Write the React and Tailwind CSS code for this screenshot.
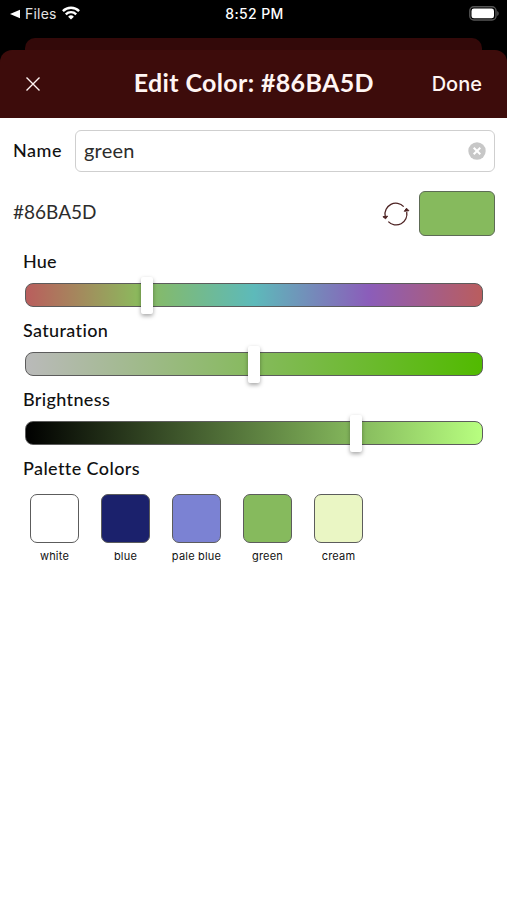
const sliders = [
  {
    label: 'Hue',
    value: 116,
    tracking: 'tracking-[0.2px]',
    track: 'bg-[linear-gradient(to_right,#ba5d5d,#8bba5d_25%,#5dbaba_50%,#8b5dba_75%,#ba5d5d)]',
  },
  {
    label: 'Saturation',
    value: 223,
    tracking: 'tracking-[0.35px]',
    track: 'bg-[linear-gradient(to_right,#bababa,#86ba5d_50%,#51ba00)]',
  },
  {
    label: 'Brightness',
    value: 325,
    tracking: 'tracking-[0.35px]',
    track: 'bg-[linear-gradient(to_right,#000000,#b8ff80)]',
  },
];

const palette = [
  { name: 'white', color: 'bg-white' },
  { name: 'blue', color: 'bg-[#1b216c]' },
  { name: 'pale blue', color: 'bg-[#7b82d3]' },
  { name: 'green', color: 'bg-[#86ba5d]' },
  { name: 'cream', color: 'bg-[#eaf6c4]' },
];

function StatusBar() {
  return (
    <div className="grid h-[27px] grid-cols-3 items-center pr-2 pl-[10px] font-['Inter',sans-serif] text-[14px] text-white">
      <div className="flex items-center">
        <svg className="mr-[5px] h-[10px] w-[10px]" viewBox="0 0 10 10" fill="currentColor">
          <path d="M0 5 10 .8v8.4z" />
        </svg>
        <span className="mr-[5px] tracking-[0.2px] text-[#e4e4e4]">Files</span>
        <svg className="-mt-[2px] h-[14px] w-[18px]" viewBox="0 0 18 14" fill="none" stroke="currentColor" strokeWidth="2.4">
          <path d="M.9 5.1a11.5 11.5 0 0 1 16.2 0" />
          <path d="M3.8 8.3a7.4 7.4 0 0 1 10.4 0" />
          <path d="M9 13.6 6.1 10.7a4.1 4.1 0 0 1 5.8 0z" fill="currentColor" stroke="none" />
        </svg>
      </div>
      <span className="text-center font-medium tracking-[0.4px]">8:52 PM</span>
      <svg className="h-[15px] w-[30px] justify-self-end" viewBox="0 0 30 15">
        <rect x=".8" y=".8" width="26.2" height="13.2" rx="4" fill="none" stroke="#555" strokeWidth="1.4" />
        <rect x="2.5" y="2.5" width="22.5" height="9.8" rx="2.4" fill="#fff" />
        <path d="M28.2 5v5c2-.8 2-4.2 0-5z" fill="#555" />
      </svg>
    </div>
  );
}

function Header() {
  return (
    <header className="flex h-[68px] items-center justify-between rounded-t-[12px] bg-[#3d0c0b] pr-[25px] pl-[26px] text-[#fff5f3]">
      <svg className="h-[14px] w-[14px]" viewBox="0 0 14 14" fill="none" stroke="currentColor" strokeWidth="1.4">
        <path d="M.5.5l13 13M13.5.5l-13 13" />
      </svg>
      <h1 className="ml-[36px] pb-[4px] text-[25px] leading-8 font-bold tracking-[0.35px] whitespace-nowrap">Edit Color: #86BA5D</h1>
      <button className="font-['Inter',sans-serif] text-[20px] font-medium">Done</button>
    </header>
  );
}

function Slider({ label, value, track, tracking }) {
  return (
    <section className="h-[69px] pl-[10px]">
      <h2 className={`h-[37px] pt-[3px] text-[18px] leading-6 font-medium ${tracking}`}>{label}</h2>
      <div className={`relative ml-[2px] h-[24px] w-[458px] rounded-[8px] border-[1.5px] border-[#5c5c5c] bg-origin-border ${track}`}>
        <div
          className="absolute -top-[7px] h-[37px] w-[12px] rounded-[2px] bg-white shadow-[0_2px_4px_rgba(0,0,0,0.35)]"
          style={{ left: value - 1 }}
        />
      </div>
    </section>
  );
}

export default function App() {
  return (
    <div className="min-h-[900px] w-[507px] bg-white font-['Lato',sans-serif] text-[#111]">
      <div className="bg-black">
        <StatusBar />
        <div className="mx-[25px] mt-[11px] h-3 rounded-t-[10px] bg-[#330909]" />
        <Header />
      </div>
      <main className="pt-[12px] pr-[12px] pl-[13px]">
        <label className="flex h-[42px] items-center">
          <span className="w-[62px] pb-px text-[18px] font-medium tracking-[0.5px]">Name</span>
          <span className="flex h-[42px] flex-1 items-center justify-between rounded-[6px] border border-[#cfcfcf] px-[8px]">
            <span className="pb-[2px] text-[20px] tracking-[0.2px] text-[#2c2c2c]">green</span>
            <svg className="h-[18px] w-[18px]" viewBox="0 0 18 18">
              <circle cx="9" cy="9" r="8.7" fill="#c7c7c7" />
              <path d="m5.7 5.7 6.6 6.6m0-6.6-6.6 6.6" stroke="#fff" strokeWidth="2" />
            </svg>
          </span>
        </label>
        <div className="mt-[19px] flex h-[45px] items-center">
          <span className="flex-1 pb-[2px] text-[19px] text-[#2c2c2c]">#86BA5D</span>
          <svg className="mr-[9px] h-[26px] w-[28px]" viewBox="0 0 28 26" fill="none" stroke="#4d2323" strokeWidth="1.3">
            <path d="M3.2 15A10.8 10.8 0 0 1 21.700 5.600M24.700 11A10.800 10.800 0 0 1 6.300 20.600" />
            <path d="M.9 15.700 5.600 15.200 3.600 17.800zM22.300 10.300l4.600-.6-2.400-2.500z" fill="#4d2323" strokeWidth="1" />
          </svg>
          <div className="h-[45px] w-[76px] rounded-[6px] border-[1.5px] border-[#5d6b55] bg-[#86ba5d]" />
        </div>
        <div className="mt-[10px]">
          {sliders.map((slider) => (
            <Slider key={slider.label} {...slider} />
          ))}
        </div>
        <h2 className="pt-[3px] pl-[10px] text-[18px] leading-6 font-medium tracking-[0.4px]">Palette Colors</h2>
        <ul className="mt-[14px] flex pl-[6px]">
          {palette.map(({ name, color }) => (
            <li key={name} className="flex w-[71px] flex-col items-center">
              <div className={`mr-px h-[49px] w-[49px] rounded-[7px] border-[1.5px] border-[#5c5c5c] ${color}`} />
              <span className="mt-[5px] font-['Inter',sans-serif] text-[11px] leading-4 tracking-[0.2px] whitespace-nowrap">{name}</span>
            </li>
          ))}
        </ul>
      </main>
    </div>
  );
}
